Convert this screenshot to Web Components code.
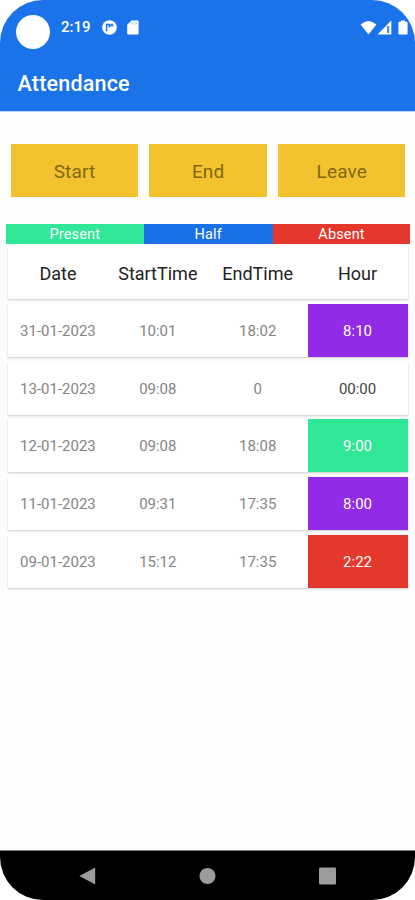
<!DOCTYPE html>
<html lang="en">
<head>
<meta charset="utf-8">
<title>Attendance</title>
<style>
html,body{margin:0;background:#fff}
body{width:415px;height:900px;overflow:hidden;font-family:Roboto,"Liberation Sans",sans-serif}
</style>
</head>
<body>
<attendance-screen></attendance-screen>
<script>
function define(name, html) {
  const t = document.createElement('template');
  t.innerHTML = html;
  customElements.define(name, class extends HTMLElement {
    constructor() {
      super();
      this.attachShadow({mode: 'open'}).appendChild(t.content.cloneNode(true));
    }
  });
}

define('status-bar', `
<style>
:host{display:flex;height:55px;box-sizing:border-box;padding:15px 7px 0 15.5px;color:#fff;align-items:flex-start}
.camera{width:34px;height:34px;border-radius:50%;background:#fff;margin-right:11.5px}
.time{font-size:15px;font-weight:500;line-height:25px;width:41px}
svg{display:block;fill:#fff}
.app{width:15px;height:15px;margin:4.5px 10px 0 0}
.sd{width:12px;height:15px;margin-top:4.5px}
.signal{margin:4.5px 0 0 auto;width:48px;height:17px}
</style>
<span class="camera"></span><span class="time">2:19</span>
<svg class="app" viewBox="0 0 15 15"><circle cx="7.5" cy="7.5" r="7.3"/><path d="M4.6 11.2V4.6H7.4V7.4" fill="none" stroke="#1a73e8" stroke-width="1.5"/><path d="M8.2 3.8h3.2v2.7H8.2z" fill="#1a73e8" opacity=".85"/></svg>
<svg class="sd" viewBox="0 0 12 15"><path d="M4.5.5h6.1q1 0 1 1v11.9q0 1-1 1H1.2q-1 0-1-1V4.8z"/><path d="M4.8 2v2.5M7 2v2.5M9.2 2v2.5" stroke="#1a73e8" stroke-width=".9" opacity=".45"/></svg>
<svg class="signal" viewBox="0 0 48 17"><path d="M.6 4.6Q8.5-2.4 16.4 4.6L8.5 14.4z"/><path d="M17.5 14.6L31.3.6v14z"/><path d="M27 6V13h2.2V6z" fill="#1a73e8" opacity=".8"/><path d="M39.3 1.8h1.6V.4h4.2v1.4h1.6q.9 0 .9.9v11q0 .9-.9.9h-7.4q-.9 0-.9-.9v-11q0-.9.9-.9z"/></svg>`);

define('app-bar', `
<style>
:host{display:block;height:112px;background:#1a73e8;border-bottom:1px solid #bcd2f4;box-sizing:border-box}
h1{margin:0;padding:14px 17.5px 0;color:#fff;font-size:21.5px;line-height:30px;font-weight:500;letter-spacing:.2px}
</style>
<status-bar></status-bar><h1><slot></slot></h1>`);

define('action-button', `
<style>
:host{display:block}
button{display:block;width:100%;height:53px;border:0;padding:1px 0 0;background:#f2c32f;color:#816914;font:400 19px Roboto,sans-serif;letter-spacing:.15px}
</style>
<button><slot></slot></button>`);

define('action-row', `
<style>:host{display:grid;grid-template-columns:127px 118.5px 127px;gap:10.9px;padding:32px 0 0 11px}</style><slot></slot>`);

define('legend-item', `
<style>:host{display:flex;align-items:center;justify-content:center;background:var(--tone);color:#fff;font-size:14.5px;letter-spacing:.15px;line-height:18px;padding-top:2px;height:18px}</style><slot></slot>`);

define('legend-bar', `
<style>:host{display:grid;grid-template-columns:137.5px 129.5px 137px;margin:26.7px 0 0 6px;height:20px}</style><slot></slot>`);

define('record-list', `
<style>:host{display:grid;grid-auto-rows:53px;row-gap:4.7px;padding:2.6px 7.5px 0 8px}</style><slot></slot>`);

define('record-row', `
<style>
:host{display:grid;grid-template-columns:repeat(4,1fr);background:#fff;box-shadow:0 1px 2px rgba(0,0,0,.2);color:#858585;font-size:15px}
:host([head]){color:#222;font-size:18px}
</style><slot></slot>`);

define('record-cell', `
<style>
:host{display:flex;align-items:center;justify-content:center;background:var(--tone,transparent);padding-top:1px;white-space:nowrap}
:host([tone]){color:#fff}
:host([dark]){color:#444}
</style><slot></slot>`);

define('nav-bar', `
<style>
:host{display:flex;justify-content:space-between;align-items:center;height:50px;box-sizing:border-box;background:#000;border-top:1px solid #777;padding:0 79px}
svg{display:block;width:17px;height:18px;fill:#9c9c9c}
</style>
<svg viewBox="0 0 17 18"><path d="M.4 9L16.2.6v16.8z"/></svg>
<svg viewBox="0 0 17 18"><circle cx="8.5" cy="9" r="8"/></svg>
<svg viewBox="0 0 17 18"><rect x="0" y=".5" width="17" height="17" rx="1.3"/></svg>`);

define('attendance-screen', `
<style>
:host{display:flex;flex-direction:column;width:415px;height:900px;background:#fdfdfd;border-radius:43px;overflow:hidden}
main{flex:1}
</style>
<app-bar>Attendance</app-bar>
<main>
<action-row><action-button>Start</action-button><action-button>End</action-button><action-button>Leave</action-button></action-row>
<legend-bar>
<legend-item style="--tone:#2fe797">Present</legend-item>
<legend-item style="--tone:#1a70e7">Half</legend-item>
<legend-item style="--tone:#e5382c">Absent</legend-item>
</legend-bar>
<record-list>
<record-row head><record-cell>Date</record-cell><record-cell>StartTime</record-cell><record-cell>EndTime</record-cell><record-cell>Hour</record-cell></record-row>
<record-row><record-cell>31-01-2023</record-cell><record-cell>10:01</record-cell><record-cell>18:02</record-cell><record-cell tone style="--tone:#922be5">8:10</record-cell></record-row>
<record-row><record-cell>13-01-2023</record-cell><record-cell>09:08</record-cell><record-cell>0</record-cell><record-cell dark>00:00</record-cell></record-row>
<record-row><record-cell>12-01-2023</record-cell><record-cell>09:08</record-cell><record-cell>18:08</record-cell><record-cell tone style="--tone:#2fe797">9:00</record-cell></record-row>
<record-row><record-cell>11-01-2023</record-cell><record-cell>09:31</record-cell><record-cell>17:35</record-cell><record-cell tone style="--tone:#922be5">8:00</record-cell></record-row>
<record-row><record-cell>09-01-2023</record-cell><record-cell>15:12</record-cell><record-cell>17:35</record-cell><record-cell tone style="--tone:#e5382c">2:22</record-cell></record-row>
</record-list>
</main>
<nav-bar></nav-bar>`);
</script>
</body>
</html>
